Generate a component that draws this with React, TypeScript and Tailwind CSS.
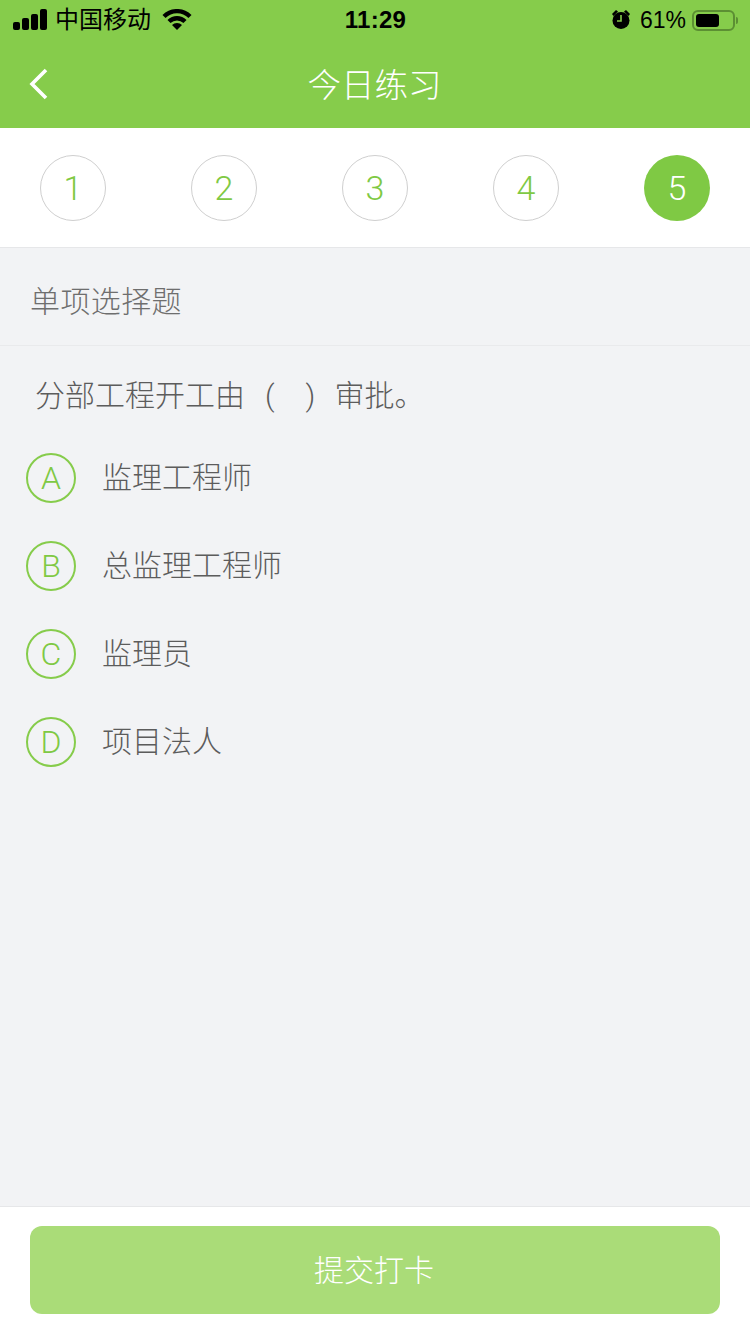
import React from 'react';

const font = { fontFamily: '"Liberation Sans", "Noto Sans CJK SC", sans-serif' };
const thinFont = { fontFamily: 'Roboto, "Liberation Sans", sans-serif' };

const steps = ['1', '2', '3', '4', '5'];

const options = [
  { key: 'A', text: '监理工程师' },
  { key: 'B', text: '总监理工程师' },
  { key: 'C', text: '监理员' },
  { key: 'D', text: '项目法人' },
];

const StatusBar = () => (
  <div className="flex h-[40px] items-center justify-between pl-[13px] pr-[15px] text-black">
    <div className="flex w-[200px] items-center">
      <svg width="34" height="22" viewBox="0 0 34 22" fill="#000">
        <rect x="0" y="13" width="7" height="8" rx="2" />
        <rect x="9" y="9" width="7" height="12" rx="2" />
        <rect x="18" y="5" width="7" height="16" rx="2" />
        <rect x="27" y="0" width="7" height="21" rx="2" />
      </svg>
      <span className="ml-[8px] text-[24px] leading-none">中国移动</span>
      <svg className="ml-[11px]" width="30" height="22" viewBox="0 0 30 22" fill="none" stroke="#000" strokeWidth="4.4">
        <path d="M2 7.5a18.5 18.5 0 0 1 26 0" />
        <path d="M7 12.5a11.5 11.5 0 0 1 16 0" />
        <path d="M15 21l-5-5a7 7 0 0 1 10 0z" fill="#000" stroke="none" />
      </svg>
    </div>
    <span className="ml-[3px] text-[24px] leading-none font-bold tracking-[0.25px]">11:29</span>
    <div className="flex w-[200px] items-center justify-end">
      <svg width="20" height="22" viewBox="0 0 20 22" fill="#000">
        <circle cx="10" cy="11.5" r="8.5" />
        <path d="M1 5l4-4 2 1.5-4.5 4.5zM19 5l-4-4-2 1.5 4.5 4.5z" />
        <path d="M10 6v6H6" fill="none" stroke="#86cc4b" strokeWidth="1.6" />
      </svg>
      <span className="ml-[9px] text-[23px] leading-none">61%</span>
      <div className="relative ml-[6px] h-[21px] w-[43px] rounded-[6px] border-2 border-[#5c8f33] p-[2px]">
        <div className="h-full w-[23px] rounded-[3px] bg-black" />
        <div className="absolute top-[5px] right-[-5px] h-[7px] w-[2px] rounded-r bg-[#5c8f33]" />
      </div>
    </div>
  </div>
);

export default function App() {
  return (
    <div className="flex h-[1334px] w-[750px] flex-col overflow-hidden bg-[#f2f3f5]" style={font}>
      <header className="h-[128px] shrink-0 bg-[#86cc4b]">
        <StatusBar />
        <div className="relative flex h-[88px] items-center justify-center pt-[4px]">
          <svg className="absolute top-[28px] left-[29px]" width="20" height="32" viewBox="0 0 20 32" fill="none" stroke="#fff" strokeWidth="3.6">
            <path d="M17 2L3 16l14 14" />
          </svg>
          <h1 className="pr-[1px] text-[33.5px] leading-none font-light text-white">今日练习</h1>
        </div>
      </header>

      <div className="flex h-[120px] shrink-0 items-center justify-between border-b border-[#e6e7e9] bg-white px-[40px] pt-[1px]" style={thinFont}>
        {steps.map((n) =>
          n === '5' ? (
            <div key={n} className="flex h-[66px] w-[66px] items-center justify-center rounded-full bg-[#7fc944] text-[34px] font-light text-white">
              {n}
            </div>
          ) : (
            <div key={n} className="flex h-[66px] w-[66px] items-center justify-center rounded-full border border-[#cfcfcf] text-[34px] font-light text-[#7fc944]">
              {n}
            </div>
          )
        )}
      </div>

      <div className="flex h-[98px] shrink-0 items-center border-b border-[#e9eaec] pl-[30px] pt-[10px] text-[30px] leading-none font-light tracking-[0.4px] text-[#6e6e6e]">
        单项选择题
      </div>

      <main className="flex-1 pt-[32px]">
        <p className="flex pl-[35px] text-[30px] leading-[36px] font-light text-[#5c5c5c]">
          分部工程开工由<span className="ml-[20px]" style={thinFont}>(</span>
          <span className="ml-[31px]" style={thinFont}>)</span>
          <span className="ml-[19px]">审批。</span>
        </p>
        <ul className="mt-[39px] flex flex-col gap-[38px] pl-[26px]">
          {options.map((o) => (
            <li key={o.key} className="flex items-center">
              <span className="flex h-[50px] w-[50px] items-center justify-center rounded-full border-2 border-[#86cc4b] text-[32px] leading-none font-light text-[#7fc944]" style={thinFont}>
                {o.key}
              </span>
              <span className="ml-[26px] text-[30px] leading-none font-light text-[#5c5c5c]">{o.text}</span>
            </li>
          ))}
        </ul>
      </main>

      <footer className="flex h-[128px] shrink-0 items-start border-t border-[#e6e7e9] bg-white px-[30px] pt-[19px]">
        <button className="h-[88px] w-full rounded-[12px] bg-[#aadc78] pr-[2px] text-[30px] font-light text-white">提交打卡</button>
      </footer>
    </div>
  );
}
